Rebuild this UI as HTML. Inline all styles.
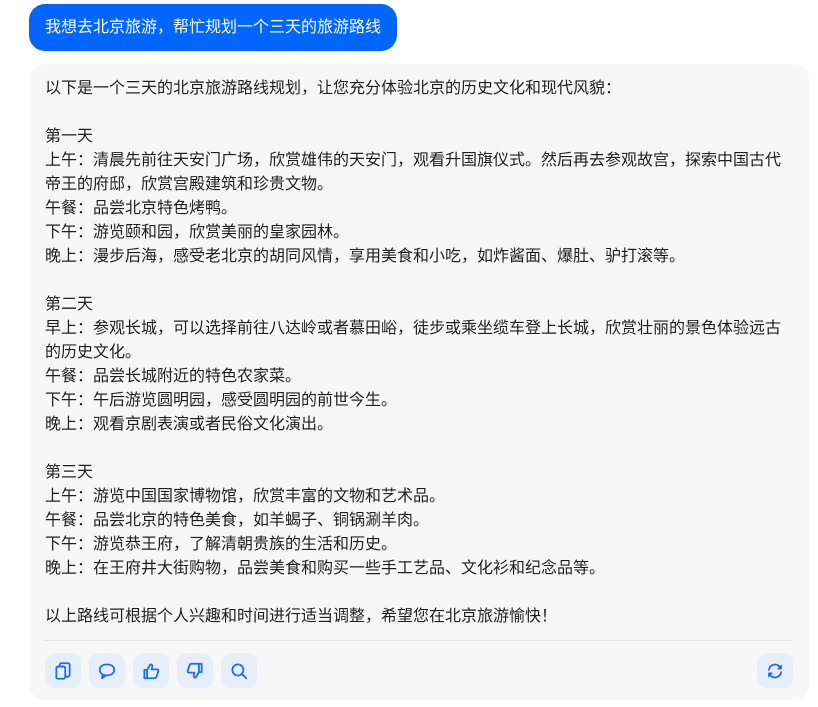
<!DOCTYPE html>
<html><head><meta charset="utf-8"><style>
*{margin:0;padding:0;box-sizing:border-box}
body{width:818px;height:707px;background:#fff;font-family:"Liberation Sans","Noto Sans CJK SC",sans-serif;overflow:hidden;position:relative}
.user{position:absolute;left:29px;top:4px;width:368px;height:47px;background:#0066ff;border-radius:16px;color:#fff;font-size:16px;line-height:47px;padding-left:16px;white-space:nowrap}
.box{position:absolute;left:29px;top:64px;width:780px;height:636px;background:#f7f7f7;border-radius:16px}
.txt{position:absolute;left:16px;top:13px;width:750px;font-size:16px;line-height:24px;color:#1f1f1f;white-space:pre-wrap}
.hr{position:absolute;left:16px;top:576px;width:748px;height:1px;background:#e3e3e3}
.btn{position:absolute;top:589px;width:36px;height:35px;border-radius:10px;background:#e6eefa;display:flex;align-items:center;justify-content:center}
.btn svg{width:20px;height:20px;fill:none;stroke:#1a6cf0;stroke-width:1.6;stroke-linecap:round;stroke-linejoin:round}
</style></head><body>
<div class="user">我想去北京旅游，帮忙规划一个三天的旅游路线</div>
<div class="box">
<div class="txt">以下是一个三天的北京旅游路线规划，让您充分体验北京的历史文化和现代风貌：

第一天
上午：清晨先前往天安门广场，欣赏雄伟的天安门，观看升国旗仪式。然后再去参观故宫，探索中国古代帝王的府邸，欣赏宫殿建筑和珍贵文物。
午餐：品尝北京特色烤鸭。
下午：游览颐和园，欣赏美丽的皇家园林。
晚上：漫步后海，感受老北京的胡同风情，享用美食和小吃，如炸酱面、爆肚、驴打滚等。

第二天
早上：参观长城，可以选择前往八达岭或者慕田峪，徒步或乘坐缆车登上长城，欣赏壮丽的景色体验远古的历史文化。
午餐：品尝长城附近的特色农家菜。
下午：午后游览圆明园，感受圆明园的前世今生。
晚上：观看京剧表演或者民俗文化演出。

第三天
上午：游览中国国家博物馆，欣赏丰富的文物和艺术品。
午餐：品尝北京的特色美食，如羊蝎子、铜锅涮羊肉。
下午：游览恭王府，了解清朝贵族的生活和历史。
晚上：在王府井大街购物，品尝美食和购买一些手工艺品、文化衫和纪念品等。

以上路线可根据个人兴趣和时间进行适当调整，希望您在北京旅游愉快！</div>
<div class="hr"></div>
<div class="btn" style="left:16px"><svg viewBox="0 0 18 18"><rect x="3" y="5" width="8" height="11" rx="1.5"/><path d="M6 5V3.5A1.5 1.5 0 0 1 7.5 2H13.5A1.5 1.5 0 0 1 15 3.5V12.5A1.5 1.5 0 0 1 13.5 14H11"/></svg></div>
<div class="btn" style="left:60px"><svg viewBox="0 0 18 18"><path d="M9 3C5 3 2.5 5.3 2.5 8S5 13 9 13C12.8 13 15.5 10.8 15.5 8S12.8 3 9 3ZM5 12L4.5 15.5L8 13"/></svg></div>
<div class="btn" style="left:104px"><svg viewBox="0 0 18 18"><path d="M5.5 8V15.5H3V8ZM5.5 8L8.5 3C10 3 10.5 4 10 6L9.5 7.5H14.5C15.5 7.5 16 8.5 15.5 9.5L13.8 14.5C13.5 15.3 13 15.5 12 15.5H5.5"/></svg></div>
<div class="btn" style="left:148px"><svg viewBox="0 0 18 18"><path d="M12.5 10V2.5H15V10ZM12.5 10L9.5 15C8 15 7.5 14 8 12L8.5 10.5H3.5C2.5 10.5 2 9.5 2.5 8.5L4.2 3.5C4.5 2.7 5 2.5 6 2.5H12.5"/></svg></div>
<div class="btn" style="left:192px"><svg viewBox="0 0 18 18"><circle cx="8" cy="8" r="5"/><path d="M11.7 11.7L15.5 15.5"/></svg></div>
<div class="btn" style="left:728px"><svg viewBox="0 0 18 18"><path d="M3.5 8A5.5 5.5 0 0 1 14 6.5M14.5 10A5.5 5.5 0 0 1 4 11.5M12 6.8L14.3 6.8L14.5 4.3M6 11.2L3.7 11.2L3.5 13.7"/></svg></div>
</div>
</body></html>
